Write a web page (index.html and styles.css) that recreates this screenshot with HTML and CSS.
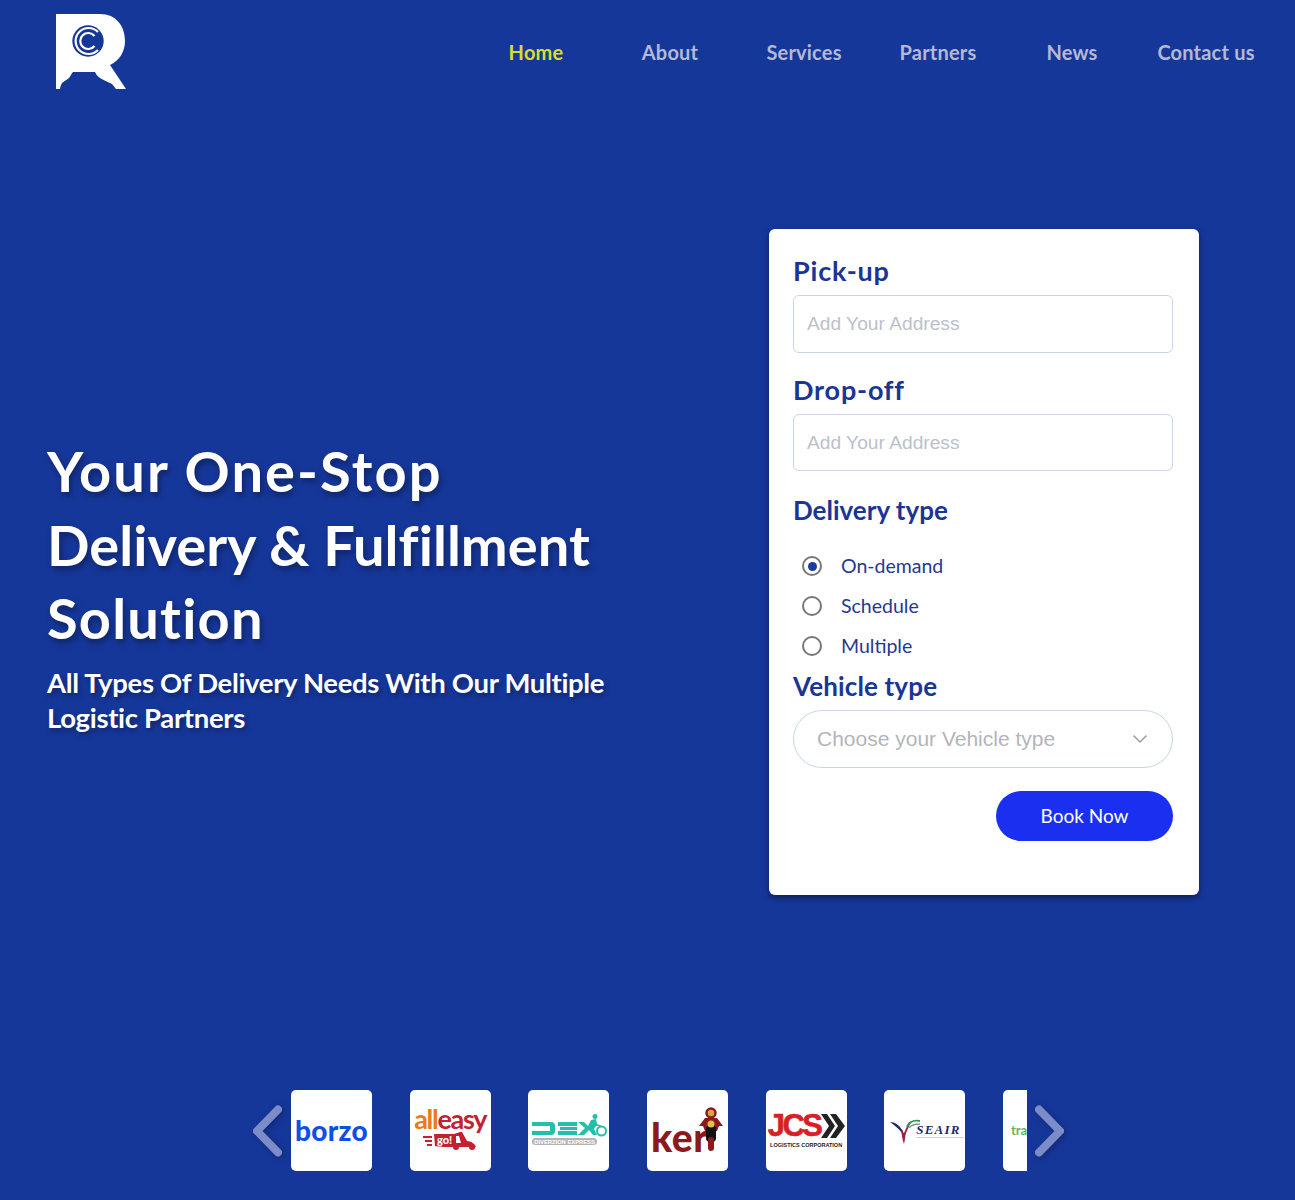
FILE: index.html
```html
<!DOCTYPE html>
<html lang="en">
<head>
<meta charset="utf-8">
<title>Delivery</title>
<link rel="stylesheet" href="styles.css">
</head>
<body>
<div class="page">
  <header class="topbar">
    <svg class="logo" viewBox="0 0 70 76" aria-label="logo">
      <path fill="#fff" d="M0 0H44C60 0 69 12 69 27C69 38 63 47 54 51L70 75H60L56 70C52 68 47 66 44 64C41 62 40 60 39 58H17C15 60 14 63 13 64C11 66 8 67 6 69C5 71 4 73 4 75H0Z"/>
      <circle cx="32" cy="27" r="15.700" fill="#16379a"/>
      <path fill="none" stroke="#fff" stroke-width="2.200" d="M42 18A13 13 0 1 0 42 36"/>
      <path fill="none" stroke="#fff" stroke-width="2.200" d="M38.500 22A8 8 0 1 0 38.500 32"/>
    </svg>
    <nav class="nav">
      <a class="nav-link active">Home</a>
      <a class="nav-link">About</a>
      <a class="nav-link">Services</a>
      <a class="nav-link">Partners</a>
      <a class="nav-link">News</a>
      <a class="nav-link">Contact us</a>
    </nav>
  </header>

  <main class="hero">
    <section class="intro">
      <h1><span class="line line-one">Your One-Stop</span> <span class="line line-two">Delivery &amp; Fulfillment</span> <span class="line line-three">Solution</span></h1>
      <p>All Types Of Delivery Needs With Our Multiple Logistic Partners</p>
    </section>
    <form class="card">
      <label class="field-label wide-label">Pick-up</label>
      <input class="text-input" placeholder="Add Your Address">
      <label class="field-label wide-label second">Drop-off</label>
      <input class="text-input short" placeholder="Add Your Address">
      <div class="field-label third">Delivery type</div>
      <div class="radios">
        <div class="radio-row"><span class="radio on"></span><span>On-demand</span></div>
        <div class="radio-row"><span class="radio"></span><span>Schedule</span></div>
        <div class="radio-row"><span class="radio"></span><span>Multiple</span></div>
      </div>
      <div class="field-label fourth">Vehicle type</div>
      <div class="select">
        <span>Choose your Vehicle type</span>
        <svg width="16" height="10" viewBox="0 0 16 10"><path d="M1.500 1.500L8 8L14.500 1.500" fill="none" stroke="#9a9da5" stroke-width="1.500"/></svg>
      </div>
      <div class="actions"><button type="button" class="book">Book Now</button></div>
    </form>
  </main>

  <section class="partners">
    <svg class="arrow" width="32" height="52" viewBox="0 0 32 52"><path d="M26 4.500L5 26L26 47.500" fill="none" stroke="#7b8cc9" stroke-width="8" stroke-linecap="round" stroke-linejoin="round"/></svg>
    <div class="track">
      <div class="tile"><span class="borzo">borzo</span></div>
      <div class="tile alleasy">
        <span class="alleasy-word"><b>all</b>easy</span>
        <svg class="scooter" width="56" height="19" viewBox="0 0 56 19"><g fill="#c4202f"><path d="M0 5H9V7H0ZM2 9H9V11H2ZM4 13H9V15H4Z"/><path d="M11 3H31L37 1L39 1L44 10C48 10 52 13 53 16H30C29 16 12 16 12 15Z"/><circle cx="33" cy="16" r="3"/><circle cx="49" cy="16" r="3"/></g><path d="M33 5H36L38 12H33Z" fill="#fff"/><text x="14" y="13" font-family="Lato, sans-serif" font-size="11" font-weight="900" fill="#fff">go!</text></svg>
      </div>
      <div class="tile dex">
        <svg width="76" height="34" viewBox="0 0 76 34"><g fill="#22bfa9"><path d="M1 8H20C23 8 24 10 24 12V17C24 20 22 21 20 21H1V17H19V12H1Z"/><path d="M27 8H46V12H27ZM29 13H46V16H29ZM27 17H46V21H27Z"/><path d="M47 8H53L57 12L60 6L65 5L66 10L71 12L65 12L63 15L66 21H62L58 16L53 21H47L54 14Z"/><circle cx="64" cy="2.500" r="2.500"/></g><circle cx="70.500" cy="17" r="4.500" fill="none" stroke="#22bfa9" stroke-width="2"/><rect x="1" y="24" width="65" height="7" rx="3.500" fill="#b3b5b8"/><text x="33.500" y="29.800" text-anchor="middle" font-family="Liberation Sans, sans-serif" font-size="5.800" font-weight="700" fill="#fff">DIVERZION EXPRESS</text></svg>
      </div>
      <div class="tile keri">
        <span class="keri-word">ker</span>
        <svg class="rider" width="24" height="44" viewBox="0 0 24 44"><circle cx="12" cy="6" r="4.500" fill="#e0a23a" stroke="#8b1a1e" stroke-width="2.500"/><path fill="#8b1a1e" d="M6 11H18L24 19H20L18 24H6L4 19H0Z"/><rect x="7" y="18" width="10" height="17" rx="4" fill="#111"/><circle cx="12" cy="17" r="3.500" fill="#e0c23a"/><rect x="9" y="30" width="6" height="14" rx="3" fill="#8b1a1e"/></svg>
      </div>
      <div class="tile jcs">
        <div class="jcs-top"><span class="jcs-word">JCS</span>
          <svg width="24" height="24" viewBox="0 0 24 24"><path fill="#222" d="M0 0H6L14 12L6 24H0L8 12ZM9 0H15L24 12L15 24H9L17 12Z"/></svg>
        </div>
        <span class="jcs-sub">LOGISTICS CORPORATION</span>
      </div>
      <div class="tile seair">
        <svg class="seair-mark" width="30" height="26" viewBox="0 0 30 26"><path d="M0 3C5 3 9 6 13 12C13 14 12 14 12 14C8 9 4 6 0 3Z" fill="#1d2a6b"/><path d="M11 11L14 14L19 3L21 3L16 14C15 18 15 21 14 25C12 20 12 16 11 11Z" fill="#a01f3a"/><path d="M17 8C19 3 24 1 30 2" fill="none" stroke="#2e9b52" stroke-width="1.800"/><path d="M19 9C21 6 25 5 30 5" fill="none" stroke="#8a8f96" stroke-width="1.300"/></svg>
        <span class="seair-text"><span class="seair-word">SEAIR</span><span class="seair-line"></span></span>
      </div>
      <div class="tile trans"><span class="trans-word">trans</span></div>
    </div>
    <svg class="arrow" width="32" height="52" viewBox="0 0 32 52"><path d="M6 4.500L27 26L6 47.500" fill="none" stroke="#7b8cc9" stroke-width="8" stroke-linecap="round" stroke-linejoin="round"/></svg>
  </section>
</div>
</body>
</html>
```
FILE: styles.css
```css
* { box-sizing: border-box; }
html, body { margin: 0; padding: 0; }
body { background: #16379a; font-family: "Lato", "Open Sans", sans-serif; }
.page { height: 1200px; overflow: hidden; display: flex; flex-direction: column; }

.topbar { display: flex; justify-content: space-between; align-items: flex-start; padding: 14px 22px 0 56px; height: 229px; }
.logo { width: 70px; height: 76px; display: block; }
.nav { display: grid; grid-template-columns: repeat(6, 134px); margin-top: 25px; }
.nav-link { text-align: center; font-size: 20px; font-weight: 700; line-height: 26px; color: #b5b9d4; letter-spacing: .2px; }
.nav-link.active { color: #d9dc2c; }

.hero { display: flex; justify-content: space-between; align-items: flex-start; padding: 0 96px 0 47px; height: 861px; }
.intro { width: 600px; padding-top: 205px; color: #fff; }
.intro h1 { margin: 0; font-size: 56px; line-height: 73.500px; font-weight: 700; text-shadow: 2px 4px 6px rgba(0,0,0,.35); }
.line { display: block; }
.line-one { letter-spacing: 2.100px; }
.line-two { letter-spacing: .05px; }
.line-three { letter-spacing: 1.200px; }
.intro p { margin: 10px 0 0; font-size: 27.500px; line-height: 35px; font-weight: 700; text-shadow: 2px 3px 5px rgba(0,0,0,.35); letter-spacing: -.33px; }

.card { width: 430px; height: 666px; background: #fff; border-radius: 6px; padding: 25px 26px 0 24px; box-shadow: 0 3px 6px rgba(0,0,0,.45); display: flex; flex-direction: column; }
.field-label { display: block; color: #1a3594; font-size: 26px; line-height: 34px; font-weight: 700; margin-bottom: 7px; height: 34px; }
.wide-label { font-size: 27px; letter-spacing: .8px; }
.field-label.second { margin-top: 20px; margin-bottom: 7px; }
.field-label.third { margin-top: 22px; margin-bottom: 0; }
.field-label.fourth { margin-top: 2px; margin-bottom: 6px; height: 36px; line-height: 36px; letter-spacing: .15px; }
.text-input { width: 380px; height: 58px; border: 1px solid #c5d7e8; border-radius: 6px; padding: 0 13px; font-family: "Liberation Sans", sans-serif; font-size: 19.200px; color: #333; outline: none; background: #fff; flex: none; }
.text-input.short { height: 57px; }
.text-input::placeholder { color: #bcc0cb; opacity: 1; }

.radios { padding: 19px 0 0 9px; display: flex; flex-direction: column; }
.radio-row { height: 40px; display: flex; align-items: center; gap: 19px; color: #24398f; font-size: 19.500px; padding-bottom: 2px; }
.radio { width: 20px; height: 20px; border-radius: 50%; border: 2px solid #777; display: block; position: relative; flex: none; top: 1px; }
.radio.on::after { content: ""; position: absolute; left: 3.500px; top: 3.500px; width: 9px; height: 9px; border-radius: 50%; background: #1a3da0; }

.select { width: 380px; height: 58px; border: 1px solid #c5d7e8; border-radius: 29px; padding: 0 24px 0 23px; display: flex; justify-content: space-between; align-items: center; font-family: "Liberation Sans", sans-serif; font-size: 21px; color: #b3b5ba; flex: none; }
.actions { display: flex; justify-content: flex-end; width: 380px; margin-top: 23px; }
.book { width: 177px; height: 50px; background: #1b2ff0; color: #fff; border: 0; border-radius: 25px; font-family: "Lato", sans-serif; font-size: 19px; padding: 0 0 1px; }

.partners { display: flex; align-items: center; padding: 0 0 0 252px; height: 81px; }
.arrow { flex: none; display: block; filter: drop-shadow(2px 2px 3px rgba(0,0,0,.25)); }
.partners .arrow:first-child { margin-right: 7px; }
.partners .arrow:last-child { margin-left: 6px; }
.track { width: 736px; height: 81px; overflow: hidden; display: flex; gap: 37.667px; flex: none; }
.tile { width: 81px; height: 81px; flex: none; background: #fff; border-radius: 5px; display: flex; align-items: center; justify-content: center; }
.tile.alleasy { flex-direction: column; }
.borzo { font-family: "Lato", sans-serif; font-weight: 900; font-size: 28px; color: #0f4fe8; letter-spacing: .3px; padding-bottom: 2px; }
.alleasy-word { font-family: "Lato", sans-serif; font-weight: 700; font-size: 27px; line-height: 24px; color: #c4202f; letter-spacing: -1.300px; margin-top: -5px; }
.alleasy-word b { font-weight: 700; color: #ea7a1c; }
.scooter { display: block; margin-left: 2px; }
.keri { position: relative; justify-content: flex-start; padding-left: 4px; }
.keri-word { font-family: "Lato", sans-serif; font-weight: 900; font-size: 39px; color: #8b1a1e; margin-top: 12px; letter-spacing: .5px; }
.rider { position: absolute; right: 5px; top: 17px; }
.jcs { flex-direction: column; }
.jcs-top { display: flex; align-items: center; }
.jcs-word { font-family: "Liberation Sans", sans-serif; font-weight: 700; font-size: 31px; color: #d81f26; letter-spacing: -2.500px; line-height: 26px; -webkit-text-stroke: .6px #d81f26; }
.jcs-sub { font-family: "Liberation Sans", sans-serif; font-size: 5.500px; font-weight: 700; color: #222; margin-top: 3px; white-space: nowrap; }
.seair { justify-content: flex-start; padding-left: 6px; }
.seair-mark { flex: none; margin-right: -4px; margin-top: 2px; }
.seair-text { display: flex; flex-direction: column; align-items: flex-start; }
.seair-word { font-family: "Liberation Serif", serif; font-style: italic; font-weight: 700; font-size: 13px; line-height: 13px; letter-spacing: 1.200px; color: #1d2a6b; }
.seair-line { display: block; width: 48px; height: 1px; background: #d0d3dc; margin-top: 1px; }
.trans { justify-content: flex-start; padding-left: 8px; overflow: hidden; }
.trans-word { font-family: "Lato", sans-serif; font-size: 13px; color: #5cb85c; font-weight: 700; padding-bottom: 2px; }
```
